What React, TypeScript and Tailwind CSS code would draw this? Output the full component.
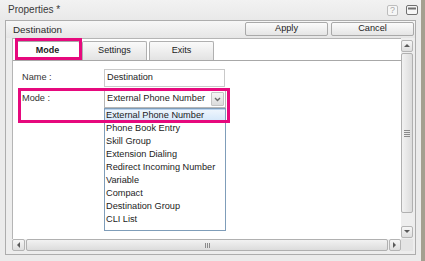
import React from "react";

function Tri({ dir }: { dir: "up" | "down" | "left" | "right" }) {
  const pts: Record<string, string> = {
    up: "1,5 4,2 7,5",
    down: "1,2 4,5 7,2",
    left: "5,1 2,4 5,7",
    right: "2,1 5,4 2,7",
  };
  return (
    <svg width="8" height="8" viewBox="0 0 8 8">
      <polygon points={pts[dir]} fill="#5a5a5a" />
    </svg>
  );
}

function ArrowBtn({ dir, cls }: { dir: "up" | "down" | "left" | "right"; cls: string }) {
  return (
    <div
      className={`flex items-center justify-center border border-[#b4b4b4] rounded-[2px] bg-linear-to-b from-[#f6f6f6] to-[#dedede] ${cls}`}
    >
      <Tri dir={dir} />
    </div>
  );
}

const items = [
  "External Phone Number",
  "Phone Book Entry",
  "Skill Group",
  "Extension Dialing",
  "Redirect Incoming Number",
  "Variable",
  "Compact",
  "Destination Group",
  "CLI List",
];

export default function App() {
  return (
    <div className="relative w-[425px] h-[261px] flex bg-[#ebebeb] overflow-hidden font-['Liberation_Sans',Arial,sans-serif] text-[#1c1c1c]">
      <div className="flex-1 flex flex-col">
        {/* title bar */}
        <div className="h-[20px] flex items-center pl-[8px] pr-[3px] bg-linear-to-b from-[#f2f2f2] to-[#e9e9e9]">
          <span className="text-[10px] text-[#3a3a3a] leading-none">Properties *</span>
          <div className="ml-auto flex items-center gap-[8px]">
            <div className="w-[11px] h-[11px] border border-[#bdbdbd] rounded-[2px] flex items-center justify-center text-[9px] leading-none text-[#a8a8a8] bg-[#f6f6f6]">
              ?
            </div>
            <svg width="12" height="10" viewBox="0 0 12 10">
              <rect x="0.5" y="0.5" width="11" height="9" rx="1.5" fill="#f6f6f6" stroke="#707070" />
              <rect x="2" y="2.5" width="8" height="2" fill="#707070" />
            </svg>
          </div>
        </div>

        {/* panel */}
        <div className="mx-[5px] mb-[6px] flex-1 flex flex-col border border-[#adadad] bg-[#ededed]">
          {/* header */}
          <div className="h-[17px] flex items-start bg-linear-to-b from-[#f7f7f7] to-[#e6e6e6]">
            <span className="pl-[7px] pt-[3px] text-[9.8px] leading-[11px] text-[#2a2a2a]">Destination</span>
            <div className="ml-auto mr-[1px] mt-[1px] flex gap-[3px]">
              <div className="w-[83px] h-[14px] border border-[#a9a9a9] rounded-[2px] bg-linear-to-b from-[#fbfbfb] to-[#e5e5e5] flex items-center justify-center text-[9.2px] leading-none">
                Apply
              </div>
              <div className="w-[83px] h-[14px] border border-[#a9a9a9] rounded-[2px] bg-linear-to-b from-[#fbfbfb] to-[#e5e5e5] flex items-center justify-center text-[9.2px] leading-none">
                Cancel
              </div>
            </div>
          </div>

          {/* content row */}
          <div className="h-[201px] flex pl-[6px] pr-[2px]">
            <div className="flex-1 bg-white border-l border-t border-[#b5b5b5] flex flex-col">
              {/* tabs */}
              <div className="h-[22px] flex items-end pl-[2px] gap-[2px] border-b border-[#a8a8a8]">
                <div className="w-[65px] h-[19px] bg-white border border-b-0 border-[#a8a8a8] rounded-t-[2px] flex items-center justify-center text-[9px] font-bold">
                  Mode
                </div>
                <div className="w-[65px] h-[19px] bg-linear-to-b from-[#fafafa] to-[#e3e3e3] border border-b-0 border-[#b0b0b0] rounded-t-[2px] flex items-center justify-center text-[9.1px]">
                  Settings
                </div>
                <div className="w-[65px] h-[19px] bg-linear-to-b from-[#fafafa] to-[#e3e3e3] border border-b-0 border-[#b0b0b0] rounded-t-[2px] flex items-center justify-center text-[9.1px]">
                  Exits
                </div>
              </div>
              {/* form */}
              <div className="pl-[9px] pt-[8px] grid grid-cols-[82px_auto] gap-y-[3px] items-center text-[9.2px]">
                <span className="text-[#333]">Name :</span>
                <div className="w-[121px] h-[18px] border border-[#c9c9c9] flex items-center pl-[2px]">Destination</div>
                <span className="text-[#333]">Mode :</span>
                <div className="w-[122px] h-[18px] border border-[#b6b6b6] flex items-center pl-[2px]">
                  <span>External Phone Number</span>
                  <div className="ml-auto mr-[1px] w-[13px] h-[14px] border border-[#c4c4c4] rounded-[1px] bg-linear-to-b from-[#f5f5f5] to-[#dcdcdc] flex items-center justify-center">
                    <svg width="7" height="5" viewBox="0 0 7 5">
                      <path d="M1 1 L3.5 3.5 L6 1" stroke="#6a6a6a" strokeWidth="1.4" fill="none" />
                    </svg>
                  </div>
                </div>
              </div>
            </div>
            {/* vertical scrollbar */}
            <div className="w-[12px] flex flex-col pt-[2px] bg-[#eeeeee]">
              <ArrowBtn dir="up" cls="h-[12px]" />
              <div className="mt-[1px] h-[160px] border border-[#b0b0b0] rounded-[2px] bg-linear-to-r from-[#f2f2f2] to-[#dcdcdc] flex items-center justify-center">
                <div className="flex flex-col gap-[1px]">
                  <div className="w-[6px] h-[1px] bg-[#8a8a8a]" />
                  <div className="w-[6px] h-[1px] bg-[#8a8a8a]" />
                  <div className="w-[6px] h-[1px] bg-[#8a8a8a]" />
                  <div className="w-[6px] h-[1px] bg-[#8a8a8a]" />
                </div>
              </div>
              <div className="h-[13px]" />
              <ArrowBtn dir="down" cls="h-[12px]" />
            </div>
          </div>

          {/* horizontal scrollbar row */}
          <div className="h-[12px] flex pl-[6px] pr-[2px]">
            <div className="flex-1 flex bg-[#eeeeee] gap-[1px]">
              <ArrowBtn dir="left" cls="w-[13px]" />
              <div className="flex-1 border border-[#b0b0b0] rounded-[2px] bg-linear-to-b from-[#f2f2f2] to-[#dcdcdc] flex items-center justify-center">
                <div className="flex gap-[1px]">
                  <div className="w-[1px] h-[5px] bg-[#8a8a8a]" />
                  <div className="w-[1px] h-[5px] bg-[#8a8a8a]" />
                  <div className="w-[1px] h-[5px] bg-[#8a8a8a]" />
                </div>
              </div>
              <ArrowBtn dir="right" cls="w-[12px]" />
            </div>
            <div className="w-[12px] bg-[#e4e4e4]" />
          </div>
          <div className="h-[3px]" />
        </div>
      </div>
      <div className="w-[4px] bg-[#a4a090]" />

      {/* dropdown list (overlay) */}
      <div className="absolute left-[104px] top-[108px] w-[122px] h-[123px] bg-white border border-[#7f9db9] text-[9.2px]">
        {items.map((t, i) => (
          <div
            key={t}
            className={
              i === 0
                ? "h-[13px] flex items-center pl-[1px] bg-linear-to-b from-[#eef5fd] to-[#d2e6fa] border-t border-[#b9d3ef]"
                : "h-[13px] flex items-center pl-[1px]"
            }
          >
            {t}
          </div>
        ))}
      </div>

      {/* annotation boxes */}
      <div className="absolute left-[15px] top-[38px] w-[67px] h-[22px] border-[3px] border-[#e6097d]" />
      <div className="absolute left-[18px] top-[88px] w-[212px] h-[35px] border-[3px] border-[#e6097d]" />
    </div>
  );
}
